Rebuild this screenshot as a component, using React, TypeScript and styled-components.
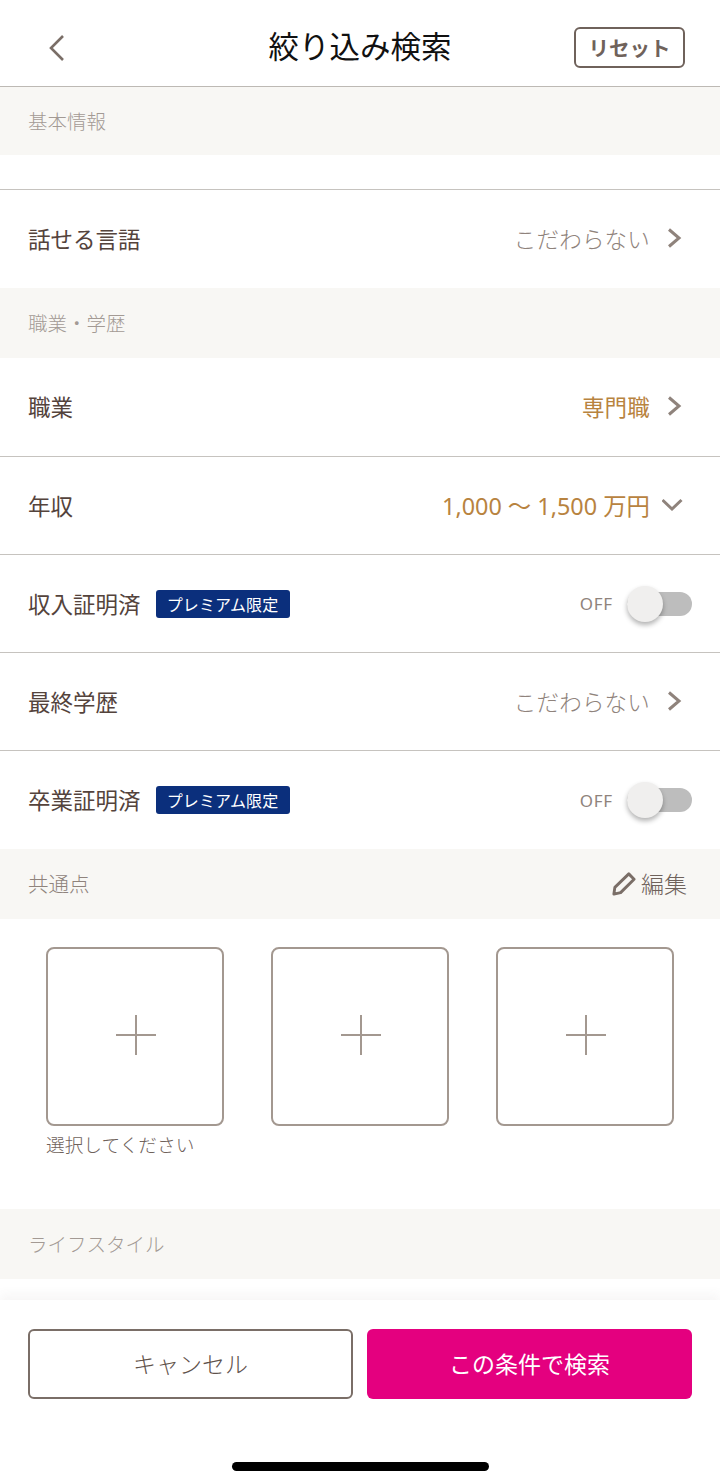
import React from 'react';
import styled, { createGlobalStyle } from 'styled-components';

const GlobalStyle = createGlobalStyle`
  html, body {
    margin: 0;
    padding: 0;
    background: #fff;
  }
  body {
    font-family: "Noto Sans CJK JP", "Noto Sans", sans-serif;
    font-weight: 300;
  }
  * { box-sizing: border-box; }
`;

const Screen = styled.div`
  width: 720px;
  height: 1484px;
  display: flex;
  flex-direction: column;
  background: #fff;
  overflow: hidden;
`;

const Header = styled.header`
  height: 87px;
  flex: none;
  display: grid;
  grid-template-columns: 1fr auto 1fr;
  align-items: center;
  padding: 9px 35px 0;
  border-bottom: 1px solid #bdb9b4;
`;

const BackIcon = styled.svg`
  width: 20px;
  height: 30px;
  margin-left: 11px;
`;

const Title = styled.h1`
  margin: 0;
  padding-bottom: 6px;
  font-size: 30.5px;
  font-weight: 400;
  line-height: 44px;
  color: #111;
`;

const ResetButton = styled.button`
  justify-self: end;
  width: 111px;
  height: 41px;
  padding: 0;
  background: #fff;
  border: 2px solid #6f625b;
  border-radius: 6px;
  font: 700 20.5px/1 "Noto Sans CJK JP", sans-serif;
  color: #6f625b;
`;

const SectionBar = styled.div`
  height: ${p => p.$h || 70}px;
  flex: none;
  display: flex;
  align-items: center;
  justify-content: space-between;
  padding: 0 33px 2px 28px;
  background: #f8f7f4;
`;

const SectionLabel = styled.span`
  font-size: ${p => (p.$strong ? 20.5 : 19.5)}px;
  font-weight: 300;
  color: ${p => (p.$strong ? '#8f837c' : '#a39a94')};
`;

const EditLink = styled.span`
  display: flex;
  align-items: center;
  gap: 5px;
  font-size: 23px;
  font-weight: 300;
  color: #6f625b;
`;

const Spacer = styled.div`
  height: ${p => p.$h}px;
  flex: none;
`;

const Row = styled.div`
  height: ${p => p.$h || 98}px;
  flex: none;
  display: flex;
  align-items: center;
  padding: 0 28px;
  border-top: ${p => (p.$line ? '1px solid #c6c3bf' : 'none')};
`;

const RowLabel = styled.span`
  padding-bottom: 2px;
  font-size: 22.5px;
  font-weight: 400;
  color: #54433c;
`;

const Badge = styled.span`
  width: 134px;
  height: 28px;
  margin-left: 15px;
  display: flex;
  align-items: center;
  justify-content: center;
  background: #0b2f7c;
  border-radius: 3px;
  font-size: 16px;
  letter-spacing: 0.1px;
  font-weight: 400;
  color: #fff;
`;

const RowValue = styled.div`
  margin-left: auto;
  display: flex;
  align-items: center;
  gap: 12px;
  padding: 0 8px 2px 0;
  font-size: 22.5px;
  letter-spacing: 0.2px;
  color: ${p => (p.$selected ? '#b8833f' : '#8f837c')};
  font-weight: ${p => (p.$selected ? 400 : 300)};
`;

const Amount = styled.span`
  font-family: "Noto Sans", "Noto Sans CJK JP", sans-serif;
  font-size: 23.4px;
  font-weight: 400;
  letter-spacing: 0;
  white-space: nowrap;
`;

const Chevron = styled.svg`
  width: 22px;
  height: 22px;
  flex: none;
`;

const ToggleWrap = styled.div`
  margin-left: auto;
  display: flex;
  align-items: center;
  gap: 14px;
`;

const OffLabel = styled.span`
  font: 400 17px/1 "Noto Sans", sans-serif;
  letter-spacing: 0.8px;
  color: #8f837c;
`;

const Track = styled.div`
  position: relative;
  width: 65px;
  height: 24px;
  background: #bdbdbd;
  border-radius: 12px;
`;

const Knob = styled.div`
  position: absolute;
  left: 0;
  top: -6px;
  width: 36px;
  height: 36px;
  background: #f0efee;
  border-radius: 50%;
  box-shadow: 0 3px 5px rgba(0, 0, 0, 0.3);
`;

const Picks = styled.div`
  height: 290px;
  flex: none;
  display: grid;
  grid-template-columns: repeat(3, 178px);
  justify-content: space-between;
  padding: 28px 46px 0;
`;

const Pick = styled.div`
  display: flex;
  flex-direction: column;
`;

const PickBox = styled.div`
  width: 178px;
  height: 179px;
  display: flex;
  align-items: center;
  justify-content: center;
  padding: 0 0 3px 2px;
  border: 2px solid #a39890;
  border-radius: 8px;
`;

const PickHint = styled.span`
  margin-top: 4px;
  font-size: 18.7px;
  font-weight: 300;
  white-space: nowrap;
  color: #6f625b;
`;

const Footer = styled.footer`
  flex: 1;
  margin-top: 21px;
  display: flex;
  flex-direction: column;
  background: #fff;
  box-shadow: 0 -6px 10px rgba(90, 80, 70, 0.05);
`;

const ButtonRow = styled.div`
  display: grid;
  grid-template-columns: 1fr 1fr;
  gap: 14px;
  padding: 29px 28px 0;
`;

const ActionButton = styled.button`
  height: 70px;
  padding: 0 0 2px;
  border-radius: 6px;
  font: ${p => (p.$primary ? 400 : 300)} 23px/1 "Noto Sans CJK JP", sans-serif;
  background: ${p => (p.$primary ? '#e4007f' : '#fff')};
  border: ${p => (p.$primary ? 'none' : '2px solid #7a6e67')};
  color: ${p => (p.$primary ? '#fff' : '#5f524b')};
`;

const HomeBar = styled.div`
  width: 257px;
  height: 9px;
  margin: 63px auto 0;
  background: #000;
  border-radius: 5px;
`;

const ChevronRight = () => (
  <Chevron viewBox="0 0 22 22" fill="none" stroke="#8f837c" strokeWidth="3">
    <path d="M7 2.5 L17 11 L7 19.5" />
  </Chevron>
);

const ChevronDown = () => (
  <Chevron viewBox="0 0 22 22" fill="none" stroke="#8f837c" strokeWidth="3">
    <path d="M0.5 6 L10 15 L19.5 6" />
  </Chevron>
);

const Plus = () => (
  <svg width="40" height="40" viewBox="0 0 40 40" stroke="#a39890" strokeWidth="2">
    <path d="M20 0 V40 M0 20 H40" />
  </svg>
);

const Pencil = () => (
  <svg width="25" height="25" viewBox="0 0 26 26" fill="none" stroke="#7a6e67" strokeWidth="3" strokeLinejoin="round">
    <path d="M18.5 3 L24 8.5 L10 22.5 L3 24 L4 17 Z" />
  </svg>
);

const Toggle = () => (
  <ToggleWrap>
    <OffLabel>OFF</OffLabel>
    <Track>
      <Knob />
    </Track>
  </ToggleWrap>
);

export default function App() {
  return (
    <Screen>
      <GlobalStyle />
      <Header>
        <BackIcon viewBox="0 0 20 30" fill="none" stroke="#7a6e67" strokeWidth="2.6">
          <path d="M17 3 L5 15 L17 27" />
        </BackIcon>
        <Title>絞り込み検索</Title>
        <ResetButton>リセット</ResetButton>
      </Header>

      <SectionBar $h={68}>
        <SectionLabel>基本情報</SectionLabel>
      </SectionBar>
      <Spacer $h={34} />
      <Row $line $h={99}>
        <RowLabel>話せる言語</RowLabel>
        <RowValue>こだわらない<ChevronRight /></RowValue>
      </Row>

      <SectionBar>
        <SectionLabel>職業・学歴</SectionLabel>
      </SectionBar>
      <Row>
        <RowLabel>職業</RowLabel>
        <RowValue $selected>専門職<ChevronRight /></RowValue>
      </Row>
      <Row $line>
        <RowLabel>年収</RowLabel>
        <RowValue $selected><Amount>1,000 〜 1,500 万円</Amount><ChevronDown /></RowValue>
      </Row>
      <Row $line>
        <RowLabel>収入証明済</RowLabel>
        <Badge>プレミアム限定</Badge>
        <Toggle />
      </Row>
      <Row $line>
        <RowLabel>最終学歴</RowLabel>
        <RowValue>こだわらない<ChevronRight /></RowValue>
      </Row>
      <Row $line $h={99}>
        <RowLabel>卒業証明済</RowLabel>
        <Badge>プレミアム限定</Badge>
        <Toggle />
      </Row>

      <SectionBar>
        <SectionLabel $strong>共通点</SectionLabel>
        <EditLink><Pencil />編集</EditLink>
      </SectionBar>
      <Picks>
        <Pick>
          <PickBox><Plus /></PickBox>
          <PickHint>選択してください</PickHint>
        </Pick>
        <Pick>
          <PickBox><Plus /></PickBox>
        </Pick>
        <Pick>
          <PickBox><Plus /></PickBox>
        </Pick>
      </Picks>

      <SectionBar>
        <SectionLabel>ライフスタイル</SectionLabel>
      </SectionBar>

      <Footer>
        <ButtonRow>
          <ActionButton>キャンセル</ActionButton>
          <ActionButton $primary>この条件で検索</ActionButton>
        </ButtonRow>
        <HomeBar />
      </Footer>
    </Screen>
  );
}
